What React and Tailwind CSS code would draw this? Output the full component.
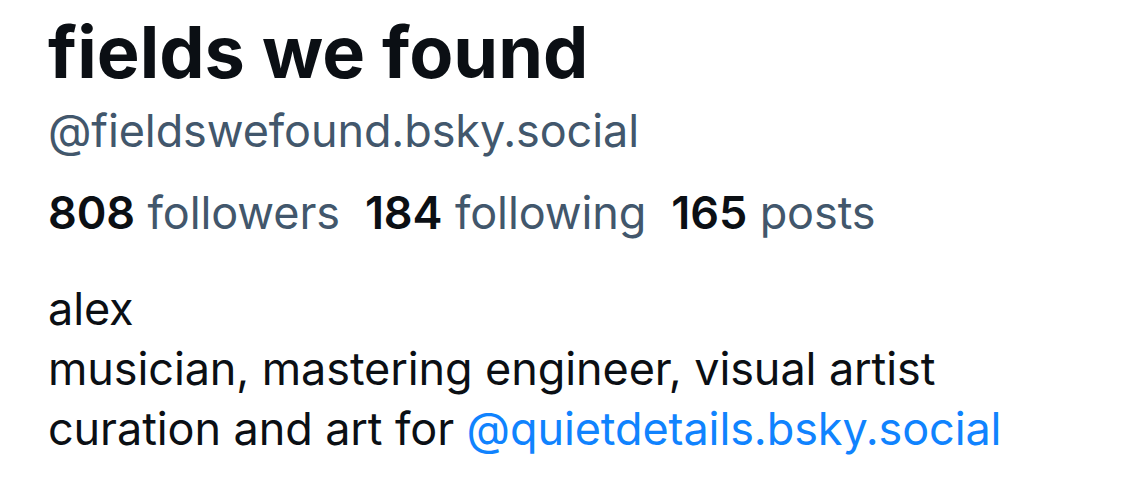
import React from 'react';

const stats = [
  { value: '808', label: 'followers' },
  { value: '184', label: 'following' },
  { value: '165', label: 'posts' },
];

const App = () => {
  return (
    <div
      className="w-[1125px] h-[488px] bg-white px-[48px] pt-[8px] overflow-hidden"
      style={{ fontFamily: 'Inter, "Noto Sans", sans-serif' }}
    >
      <h1 className="text-[72px] leading-[88px] font-bold text-[#0b0f14]">
        fields we found
      </h1>
      <div className="text-[45px] leading-[54px] text-[#42576c] mt-[8px] tracking-[-0.1px]">
        @fieldswefound.bsky.social
      </div>

      {/* Stats */}
      <div className="flex gap-[25px] text-[45px] leading-[54px] mt-[28px] tracking-[-0.1px]">
        {stats.map((s) => (
          <div key={s.label}>
            <span className="font-semibold text-[#0b0f14]">{s.value}</span>{' '}
            <span className="text-[#42576c]">{s.label}</span>
          </div>
        ))}
      </div>

      {/* Description */}
      <div className="mt-[39px] text-[45px] leading-[60px] text-[#0b0f14] tracking-[-0.1px]">
        <div>alex</div>
        <div>musician, mastering engineer, visual artist</div>
        <div>
          curation and art for{' '}
          <span className="text-[#1083fe]">@quietdetails.bsky.social</span>
        </div>
      </div>
    </div>
  );
};

export default App;
